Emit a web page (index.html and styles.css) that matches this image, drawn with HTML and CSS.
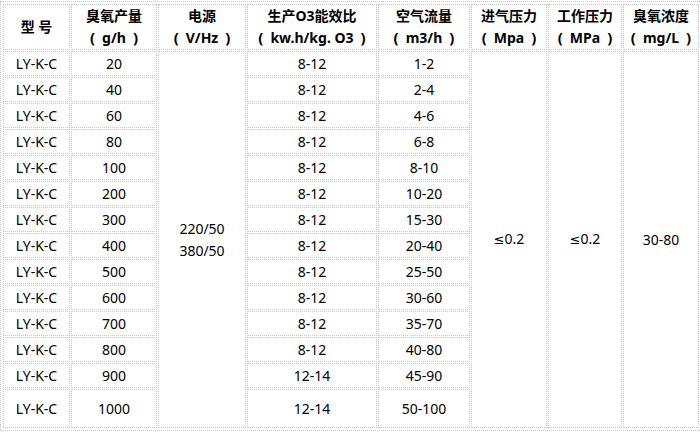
FILE: index.html
```html
<!DOCTYPE html>
<html lang="zh-CN">
<head>
<meta charset="utf-8">
<title>臭氧发生器参数</title>
<link rel="stylesheet" href="styles.css">
</head>
<body>
<table class="spec">
  <colgroup>
    <col class="c1"><col class="c2"><col class="c3"><col class="c4"><col class="c5"><col class="c6"><col class="c7"><col class="c8">
  </colgroup>
  <thead>
    <tr>
      <th>型 号</th>
      <th>臭氧产量<br><span class="pl">(</span>g/h<span class="pr">)</span></th>
      <th>电源<br><span class="pl">(</span>V/Hz<span class="pr">)</span></th>
      <th>生产O3能效比<br><span class="pl">(</span>kw.h/kg. O3<span class="pr">)</span></th>
      <th>空气流量<br><span class="pl">(</span>m3/h<span class="pr">)</span></th>
      <th>进气压力<br><span class="pl">(</span>Mpa<span class="pr">)</span></th>
      <th>工作压力<br><span class="pl">(</span>MPa<span class="pr">)</span></th>
      <th>臭氧浓度<br><span class="pl">(</span>mg/L<span class="pr">)</span></th>
    </tr>
  </thead>
  <tbody>
    <tr><td>LY-K-C</td><td>20</td><td rowspan="14">220/50<br>380/50</td><td>8-12</td><td>1-2</td><td rowspan="14"><span class="le">≤</span>0.2</td><td rowspan="14"><span class="le">≤</span>0.2</td><td rowspan="14">30-80</td></tr>
    <tr><td>LY-K-C</td><td>40</td><td>8-12</td><td>2-4</td></tr>
    <tr><td>LY-K-C</td><td>60</td><td>8-12</td><td>4-6</td></tr>
    <tr><td>LY-K-C</td><td>80</td><td>8-12</td><td>6-8</td></tr>
    <tr><td>LY-K-C</td><td>100</td><td>8-12</td><td>8-10</td></tr>
    <tr><td>LY-K-C</td><td>200</td><td>8-12</td><td>10-20</td></tr>
    <tr><td>LY-K-C</td><td>300</td><td>8-12</td><td>15-30</td></tr>
    <tr><td>LY-K-C</td><td>400</td><td>8-12</td><td>20-40</td></tr>
    <tr><td>LY-K-C</td><td>500</td><td>8-12</td><td>25-50</td></tr>
    <tr><td>LY-K-C</td><td>600</td><td>8-12</td><td>30-60</td></tr>
    <tr><td>LY-K-C</td><td>700</td><td>8-12</td><td>35-70</td></tr>
    <tr><td>LY-K-C</td><td>800</td><td>8-12</td><td>40-80</td></tr>
    <tr><td>LY-K-C</td><td>900</td><td>12-14</td><td>45-90</td></tr>
    <tr class="last"><td>LY-K-C</td><td>1000</td><td>12-14</td><td>50-100</td></tr>
  </tbody>
</table>
</body>
</html>
```

FILE: styles.css
```css
html, body {
  margin: 0;
  padding: 0;
  background: #fff;
  overflow: hidden;
}

.spec {
  margin-top: 1px;
  width: 702px;
  table-layout: fixed;
  border-collapse: separate;
  border-spacing: 1px;
  padding: 1px;
  border: 1px dotted #c8c8c8;
  font-family: "Noto Sans", "Noto Sans CJK SC", sans-serif;
  font-size: 14px;
  color: #000;
}

.c1 { width: 67px; }
.c2 { width: 86px; }
.c3 { width: 88px; }
.c4 { width: 130px; }
.c5 { width: 92px; }
.c6 { width: 76px; }
.c7 { width: 74px; }
.c8 { width: 76px; }

.spec th,
.spec td {
  border: 1px dotted #c8c8c8;
  padding: 0;
  text-align: center;
  vertical-align: middle;
  white-space: nowrap;
}

.spec th {
  font-weight: bold;
  line-height: 22px;
}

.spec td {
  line-height: 23px;
}

.spec td[rowspan] {
  line-height: 22px;
}

.spec .last td {
  line-height: 37px;
}

.spec .last td[rowspan] {
  line-height: 22px;
}

.pl,
.pr {
  font-size: 15px;
  line-height: 1;
}

.pl {
  margin: 0 7px 0 3px;
}

.pr {
  margin: 0 3px 0 7px;
}

.le {
  font-family: "DejaVu Sans", sans-serif;
  font-size: 13px;
}
```
